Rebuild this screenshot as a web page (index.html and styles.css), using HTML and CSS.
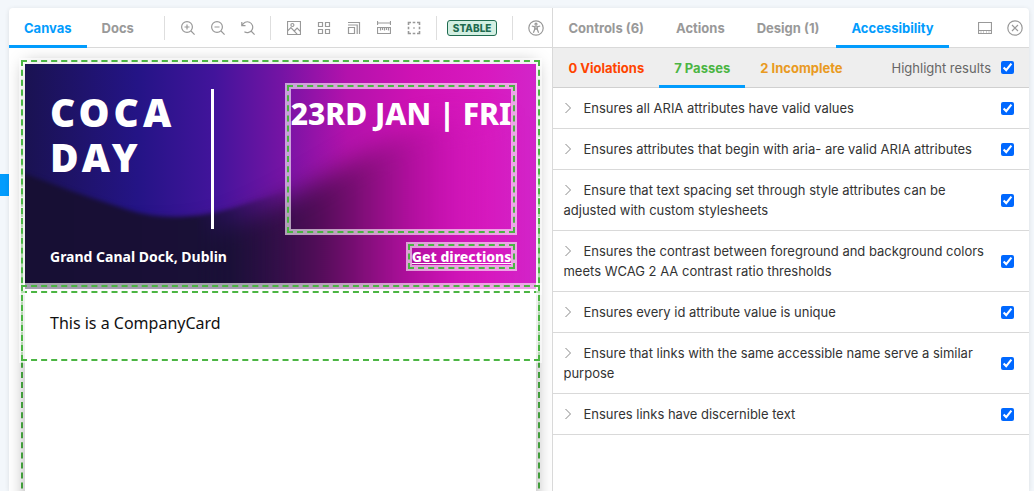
FILE: index.html
```html
<!DOCTYPE html>
<html lang="en">
<head>
<meta charset="utf-8">
<title>CompanyCard - Canvas</title>
<link rel="stylesheet" href="styles.css">
</head>
<body>
<div class="layout">
  <div class="gutter"><span class="nav-marker"></span></div>
  <div class="workspace">
    <main class="stage">
      <header class="bar">
        <nav class="tabs">
          <button class="tab tab-active" type="button">Canvas</button>
          <button class="tab" type="button">Docs</button>
        </nav>
        <div class="group zoom-group">
          <button class="tool" type="button" aria-label="Zoom in"><svg class="icon" viewBox="0 0 14 14"><circle cx="6" cy="6" r="5.4"/><path d="M3.500 6h5M6 3.500v5M10 10l3.600 3.600"/></svg></button>
          <button class="tool" type="button" aria-label="Zoom out"><svg class="icon" viewBox="0 0 14 14"><circle cx="6" cy="6" r="5.4"/><path d="M3.500 6h5M10 10l3.600 3.600"/></svg></button>
          <button class="tool" type="button" aria-label="Reset zoom"><svg class="icon" viewBox="0 0 14 14"><path d="M.8 1v3.700h3.700M1.200 4.400A5.400 5.400 0 1 1 3.400 10.700M10 10l3.600 3.600"/></svg></button>
        </div>
        <div class="group">
          <button class="tool" type="button" aria-label="Background"><svg class="icon" viewBox="0 0 14 14"><path d="M.5.5h13v13H.5zM.7 9.900l3.200-3.200 6.200 6.400M7.200 10l2.900-2.900 3.200 3.200"/><circle cx="5.400" cy="4" r="1.500"/></svg></button>
          <button class="tool" type="button" aria-label="Grid"><svg class="icon" viewBox="0 0 14 14"><path d="M1.500 1.500h4v4h-4zM8.500 1.500h4v4h-4zM1.500 8.500h4v4h-4zM8.500 8.500h4v4h-4z"/></svg></button>
          <button class="tool" type="button" aria-label="Viewport"><svg class="icon" viewBox="0 0 14 14"><path d="M1.500 6.500h6v6h-6zM1 4h9.200v9M1 1.500h11.500V13"/></svg></button>
          <button class="tool" type="button" aria-label="Measure"><svg class="icon" viewBox="0 0 14 14"><path d="M.5 0v4M13.500 0v4M.5 2h13M.5 6.500h13v6H.5zM3.500 7v2.500M5.500 7v2M7.500 7v2.500M9.500 7v2M11.500 7v2.500"/></svg></button>
          <button class="tool" type="button" aria-label="Outline"><svg class="icon icon-bold" viewBox="0 0 14 14"><path d="M1.500 4V1.500H4M10 1.500h2.500V4M12.500 10v2.500H10M4 12.500H1.500V10M5.700 1.500h2.600M5.700 12.500h2.600M1.500 5.700v2.600M12.500 5.700v2.600M6.300 7h1.400"/></svg></button>
        </div>
        <div class="group badge-group"><span class="badge">STABLE</span></div>
        <div class="group">
          <button class="tool" type="button" aria-label="Vision simulator"><svg class="icon icon-large" viewBox="0 0 16 16"><circle cx="8" cy="8" r="7.200"/><circle cx="8" cy="4.200" r="1"/><path d="M3.800 6l2.900.8v2.500l-1.300 3.500M12.200 6l-2.900.8v2.500l1.300 3.500M6.700 6.800h2.600M6.800 9.500L8 8.700l1.200.8"/></svg></button>
        </div>
      </header>
      <div class="canvas">
        <article class="page checked">
          <section class="hero checked">
            <svg class="hero-art" viewBox="0 0 511 225" preserveAspectRatio="none" aria-hidden="true">
              <defs>
                <linearGradient id="sky" x1="0" y1="0" x2="1" y2="0">
                  <stop offset="0" stop-color="#1a1252"/>
                  <stop offset=".22" stop-color="#241486"/>
                  <stop offset=".37" stop-color="#42149b"/>
                  <stop offset=".5" stop-color="#7414a4"/>
                  <stop offset=".63" stop-color="#b312ac"/>
                  <stop offset=".76" stop-color="#cf12b4"/>
                  <stop offset=".9" stop-color="#d819bf"/>
                  <stop offset="1" stop-color="#d225c9"/>
                </linearGradient>
                <linearGradient id="dune" x1="0" y1="0" x2="511" y2="0" gradientUnits="userSpaceOnUse">
                  <stop offset="0" stop-color="#170f34"/>
                  <stop offset=".4" stop-color="#1a1037"/>
                  <stop offset=".49" stop-color="#310f48"/>
                  <stop offset=".58" stop-color="#540c59"/>
                  <stop offset=".67" stop-color="#860e7c"/>
                  <stop offset=".76" stop-color="#b00f9e" stop-opacity=".9"/>
                  <stop offset=".85" stop-color="#cc13b5" stop-opacity=".5"/>
                  <stop offset=".95" stop-color="#d41dc4" stop-opacity="0"/>
                </linearGradient>
                <linearGradient id="fade" x1="170" y1="0" x2="270" y2="0" gradientUnits="userSpaceOnUse"><stop offset="0" stop-color="#fff"/><stop offset="1" stop-color="#000"/></linearGradient>
                <filter id="soft" x="-10%" y="-30%" width="120%" height="160%" color-interpolation-filters="sRGB"><feGaussianBlur stdDeviation="2"/></filter>
                <filter id="softer" x="-20%" y="-50%" width="140%" height="200%" color-interpolation-filters="sRGB"><feGaussianBlur stdDeviation="12"/></filter>
                <mask id="near"><path d="M0 0h511v225H0z" fill="url(#fade)"/></mask>
              </defs>
              <path d="M0 0h511v225H0z" fill="url(#sky)"/>
              <path d="M-80 170H150C200 168 235 148 270 130C310 108 350 80 400 60L600 40V300H-80z" fill="url(#dune)" filter="url(#softer)"/>
              <g mask="url(#near)"><path d="M-30 98C30 122 60 132 100 145C140 158 175 153 205 145C240 134 260 128 290 118V300H-30z" fill="url(#dune)" filter="url(#soft)"/></g>
            </svg>
            <div class="hero-top">
              <h1 class="title">COCA<br>DAY</h1>
              <div class="date checked">23RD JAN | FRI</div>
            </div>
            <div class="hero-bottom">
              <span>Grand Canal Dock, Dublin</span>
              <a class="directions checked" href="#">Get directions</a>
            </div>
          </section>
          <section class="body checked">This is a CompanyCard</section>
        </article>
      </div>
    </main>
    <aside class="addons">
      <header class="bar">
        <nav class="tabs panel-tabs">
          <button class="tab" type="button">Controls (6)</button>
          <button class="tab" type="button">Actions</button>
          <button class="tab" type="button">Design (1)</button>
          <button class="tab tab-active" type="button">Accessibility</button>
        </nav>
        <div class="panel-tools">
          <button class="tool" type="button" aria-label="Change orientation"><svg class="icon" viewBox="0 0 14 14"><path d="M.5 1.500h13v11H.5zM.5 9.500h13M2.500 11h1M5 11h1M8 11h1M10.500 11h1"/></svg></button>
          <button class="tool" type="button" aria-label="Hide addons"><svg class="icon icon-large" viewBox="0 0 16 16"><circle cx="8" cy="8" r="7.200"/><path d="M5 5l6 6M11 5l-6 6"/></svg></button>
        </div>
      </header>
      <div class="results-bar">
        <nav class="tabs result-tabs">
          <button class="tab violations" type="button">0 Violations</button>
          <button class="tab passes tab-active" type="button">7 Passes</button>
          <button class="tab incomplete" type="button">2 Incomplete</button>
        </nav>
        <label class="highlight">Highlight results <input class="check" type="checkbox" checked></label>
      </div>
      <ul class="rules">
        <li class="rule"><label class="rule-name" for="r1"><svg class="chevron" viewBox="0 0 10 10"><path d="M2.500 0L7.500 5 2.500 10"/></svg>Ensures all ARIA attributes have valid values</label><input class="check" id="r1" type="checkbox" checked></li>
        <li class="rule"><label class="rule-name" for="r2"><svg class="chevron" viewBox="0 0 10 10"><path d="M2.500 0L7.500 5 2.500 10"/></svg>Ensures attributes that begin with aria- are valid ARIA attributes</label><input class="check" id="r2" type="checkbox" checked></li>
        <li class="rule"><label class="rule-name" for="r3"><svg class="chevron" viewBox="0 0 10 10"><path d="M2.500 0L7.500 5 2.500 10"/></svg>Ensure that text spacing set through style attributes can be adjusted with custom stylesheets</label><input class="check" id="r3" type="checkbox" checked></li>
        <li class="rule"><label class="rule-name" for="r4"><svg class="chevron" viewBox="0 0 10 10"><path d="M2.500 0L7.500 5 2.500 10"/></svg>Ensures the contrast between foreground and background colors meets WCAG 2 AA contrast ratio thresholds</label><input class="check" id="r4" type="checkbox" checked></li>
        <li class="rule"><label class="rule-name" for="r5"><svg class="chevron" viewBox="0 0 10 10"><path d="M2.500 0L7.500 5 2.500 10"/></svg>Ensures every id attribute value is unique</label><input class="check" id="r5" type="checkbox" checked></li>
        <li class="rule"><label class="rule-name" for="r6"><svg class="chevron" viewBox="0 0 10 10"><path d="M2.500 0L7.500 5 2.500 10"/></svg>Ensure that links with the same accessible name serve a similar purpose</label><input class="check" id="r6" type="checkbox" checked></li>
        <li class="rule"><label class="rule-name" for="r7"><svg class="chevron" viewBox="0 0 10 10"><path d="M2.500 0L7.500 5 2.500 10"/></svg>Ensures links have discernible text</label><input class="check" id="r7" type="checkbox" checked></li>
      </ul>
    </aside>
  </div>
</div>
</body>
</html>
```
FILE: styles.css
```css
* { box-sizing: border-box; }
body {
  margin: 0;
  background: #f3f7fb;
  color: #333;
  font: 13px/20px Inter, "Liberation Sans", sans-serif;
}
button {
  margin: 0;
  border: 0;
  background: none;
  font: inherit;
  color: inherit;
  cursor: pointer;
}
.layout { display: flex; height: 100vh; overflow: hidden; }
.gutter { flex: 0 0 9px; padding-top: 174px; }
.nav-marker { display: block; height: 22px; background: #029cfd; }
.workspace {
  flex: 1;
  display: flex;
  min-width: 0;
  margin: 8px 5px 0 0;
  border-radius: 4px 4px 0 0;
  background: #fff;
  box-shadow: 0 1px 5px rgba(0, 0, 0, .1);
  overflow: hidden;
}
.stage { flex: 544 1 0; min-width: 0; display: flex; flex-direction: column; border-right: 1px solid #d9d9d9; }
.addons { flex: 476 1 0; min-width: 0; }
.bar {
  display: flex;
  justify-content: space-between;
  height: 40px;
  border-bottom: 1px solid #d9d9d9;
}
.tabs { display: flex; height: 40px; }
.panel-tabs { gap: 2px; }
.tab {
  padding: 3px 15px 0;
  border-bottom: 3px solid transparent;
  color: #999;
  font-weight: 700;
  white-space: nowrap;
}
.tab-active { border-color: #029cfd; color: #029cfd; }

.stage .bar { justify-content: flex-start; }
.group {
  display: flex;
  align-items: center;
  gap: 2px;
  height: 40px;
  padding: 0 8px 0 10px;
  position: relative;
}
.group::before {
  content: "";
  position: absolute;
  left: 0;
  top: 8px;
  width: 1px;
  height: 24px;
  background: #dedede;
}
.zoom-group { margin-left: 15px; }
.tool { display: flex; align-items: center; justify-content: center; width: 28px; height: 28px; padding: 0; color: #999; }
.icon { width: 14px; height: 14px; fill: none; stroke: currentColor; stroke-width: 1.2; }
.icon-bold { stroke-width: 1.6; }
.icon-large { width: 16px; height: 16px; }
.badge-group { padding: 0 15px 0 11px; }
.badge {
  padding: 0 5px;
  border: 1px solid #1f6b50;
  border-radius: 3px;
  background: #d3efe2;
  color: #1f6b50;
  font-size: 10px;
  font-weight: 800;
  line-height: 14px;
}

.canvas { flex: 1; padding: 16px; overflow: hidden; }
.page {
  height: 100vh;
  font-family: "Noto Sans", sans-serif;
  position: relative;
}
.page::before {
  content: "";
  position: absolute;
  inset: 0;
  box-shadow: 0 0 16px rgba(0, 0, 0, .35);
}
.checked {
  outline: 2px dashed #4bb543;
  outline-offset: 2px;
  box-shadow: 0 0 0 6px rgba(255, 255, 255, .6);
}
.hero {
  position: relative;
  display: flex;
  flex-direction: column;
  gap: 19px;
  padding: 25px 25px 24px;
  color: #fff;
}
.hero-art { position: absolute; inset: 0; width: 100%; height: 100%; }
.hero-top, .hero-bottom { position: relative; display: flex; justify-content: space-between; }
.hero-top { height: 140px; }
.title {
  flex: 0 0 164px;
  margin: 0;
  border-right: 3px solid #fff;
  font-size: 39px;
  line-height: 45px;
  font-weight: 900;
  letter-spacing: 4px;
}
.date { font-size: 30px; line-height: 50px; font-weight: 800; white-space: nowrap; }
.hero-bottom { font-size: 14px; line-height: 17px; font-weight: 700; }
.directions { color: #fff; font-weight: 800; }
.body { position: relative; padding: 25px; color: #111; font-size: 16px; line-height: 18px; }

.panel-tools { display: flex; align-items: center; gap: 2px; height: 40px; }
.results-bar {
  display: flex;
  justify-content: space-between;
  height: 40px;
  border-bottom: 1px solid #d0d0d0;
  background: #eee;
}
.violations { color: #ff4400; }
.passes { color: #4bb543; }
.incomplete { color: #e99a22; }
.highlight { display: flex; align-items: center; gap: 10px; padding-right: 15px; color: #666; }
.check { flex: none; width: 13px; height: 13px; margin: 0; accent-color: #0068ff; }
.rules { margin: 0; padding: 0; list-style: none; }
.rule {
  display: flex;
  align-items: center;
  justify-content: space-between;
  padding: 10px 15px 10px 10px;
  border-bottom: 1px solid #d9d9d9;
}
.rule-name { flex: 0 1 426px; }
.chevron { width: 10px; height: 10px; margin-right: 10px; fill: none; stroke: #888; stroke-width: 1; }
```
